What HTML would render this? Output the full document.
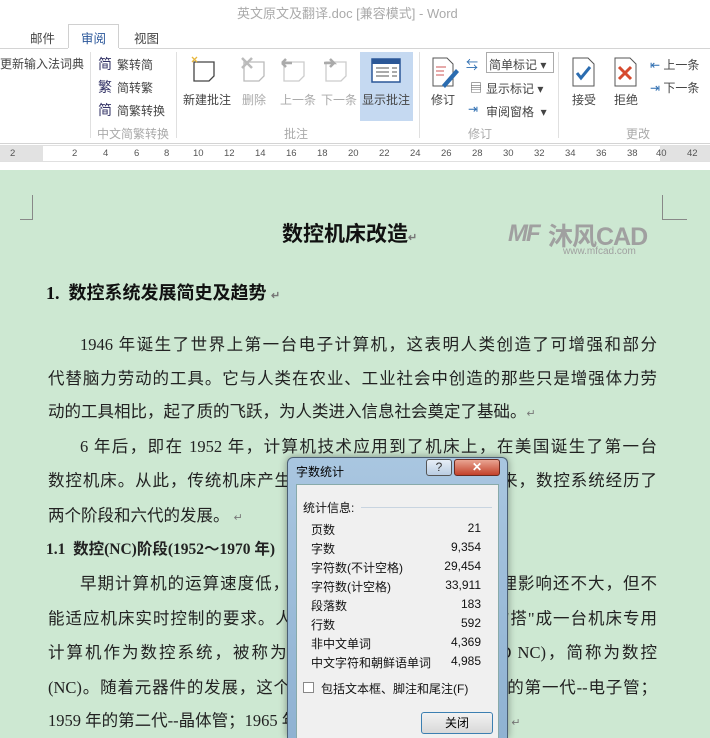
<!DOCTYPE html>
<html><head><meta charset="utf-8"><style>
*{margin:0;padding:0;box-sizing:border-box}
html,body{width:710px;height:738px;overflow:hidden}
body{position:relative;background:#fff;font-family:"Liberation Sans","Noto Sans CJK SC",sans-serif;color:#444}
.a{position:absolute;white-space:nowrap}
.t{font-size:12px}
.g{color:#aaa}
#doc{position:absolute;left:0;top:170px;width:710px;height:568px;background:#cde8d2}
.ln{position:absolute;font-size:16.5px;color:#222;text-align:justify;text-align-last:justify;white-space:nowrap;height:22px;line-height:22px;font-family:"Liberation Serif","Noto Sans CJK SC",sans-serif}
.ret{font-size:11px;color:#777}
#dlg{position:absolute;left:287px;top:457px;width:221px;height:281px;background:linear-gradient(#a9c6e0,#8fb2d2);border:1px solid #4b5f74;border-bottom:none;border-radius:6px 6px 0 0;box-shadow:0 0 8px rgba(0,0,0,.4);overflow:hidden}
#inner{position:absolute;left:8px;top:26px;width:203px;height:270px;background:#f0f0f0;border:1px solid #8aa;}
.r{position:absolute;left:14px;width:170px;font-size:12px;color:#111;display:flex;justify-content:space-between}
</style></head><body>
<div class="a t g" style="left:237px;top:3px;font-size:13px">英文原文及翻译.doc [兼容模式] - Word</div>
<div class="a t" style="left:30px;top:28px;font-size:12.5px">邮件</div>
<div style="position:absolute;left:68px;top:24px;width:51px;height:25px;border:1px solid #d0d0d0;border-bottom:none;background:#fff"></div>
<div class="a t" style="left:81px;top:28px;color:#2b579a;font-size:12.5px">审阅</div>
<div class="a t" style="left:134px;top:28px;font-size:12.5px">视图</div>
<div style="position:absolute;left:0;top:48px;width:710px;height:1px;background:#d4d4d4"></div>
<div style="position:absolute;left:68px;top:48px;width:51px;height:1px;background:#fff"></div>
<div style="position:absolute;left:0;top:143px;width:710px;height:1px;background:#d4d4d4"></div>
<div class="a t" style="left:0;top:55px">更新输入法词典</div>
<div style="position:absolute;left:90px;top:52px;width:1px;height:86px;background:#e0e0e0"></div>
<div class="a t" style="left:98px;top:54px;color:#336;font-size:14px">简</div><div class="a t" style="left:117px;top:56px">繁转简</div>
<div class="a t" style="left:98px;top:77px;color:#336;font-size:14px">繁</div><div class="a t" style="left:117px;top:79px">简转繁</div>
<div class="a t" style="left:98px;top:100px;color:#336;font-size:14px">简</div><div class="a t" style="left:117px;top:102px">简繁转换</div>
<div class="a t g" style="left:97px;top:125px">中文简繁转换</div>
<div style="position:absolute;left:176px;top:52px;width:1px;height:86px;background:#e0e0e0"></div>
<svg class="a" style="left:190px;top:56px" width="160" height="30"><g fill="none" stroke-width="1.3"><path d="M4 6h20v14l-5 5H4z" stroke="#444"/><path d="M2 1l5 5M7 1L2 6" stroke="#e8b840"/><path d="M54 6h20v14l-5 5H54z" stroke="#bbb"/><path d="M52 2l10 10M62 2L52 12" stroke="#bbb" stroke-width="2.5"/><path d="M94 6h20v14l-5 5H94z" stroke="#ccc"/><path d="M92 7h10M92 7l4-4M92 7l4 4" stroke="#aaa" stroke-width="2.5"/><path d="M136 6h20v14l-5 5h-15z" stroke="#ccc"/><path d="M134 7h10l-4-4M144 7l-4 4" stroke="#aaa" stroke-width="2.5"/></g></svg>
<div class="a t" style="left:183px;top:91px">新建批注</div>
<div class="a t g" style="left:242px;top:91px">删除</div>
<div class="a t g" style="left:280px;top:91px">上一条</div>
<div class="a t g" style="left:321px;top:91px">下一条</div>
<div style="position:absolute;left:360px;top:52px;width:53px;height:69px;background:#c5d9f1"></div>
<svg class="a" style="left:371px;top:58px" width="30" height="26"><rect x="1" y="1" width="28" height="23" fill="#fff" stroke="#2b5797" stroke-width="1.5"/><rect x="1" y="1" width="28" height="5" fill="#2b5797"/><path d="M5 10h13M5 14h13M5 18h13M21 10h5M21 14h5M21 18h5" stroke="#555"/></svg>
<div class="a t" style="left:362px;top:91px">显示批注</div>
<div class="a t g" style="left:284px;top:125px">批注</div>
<div style="position:absolute;left:419px;top:52px;width:1px;height:86px;background:#e0e0e0"></div>
<svg class="a" style="left:432px;top:57px" width="30" height="32"><path d="M1 1h14l6 6v22H1z" fill="#fff" stroke="#555"/><path d="M4 10h10M4 14h8M4 18h8" stroke="#c55"/><path d="M10 28l14-16 3 3-14 16z" fill="#2b6cb0"/></svg>
<div class="a t" style="left:431px;top:91px">修订</div>
<div style="position:absolute;left:486px;top:52px;width:68px;height:21px;border:1px solid #ababab"></div>
<div class="a t" style="left:489px;top:56px">简单标记 ▾</div>
<div class="a t" style="left:466px;top:56px;color:#2b6cb0">⇆</div>
<div class="a t" style="left:470px;top:79px">▤</div><div class="a t" style="left:486px;top:80px">显示标记 ▾</div>
<div class="a t" style="left:468px;top:102px;color:#2b6cb0">⇥</div><div class="a t" style="left:486px;top:103px">审阅窗格 &nbsp;▾</div>
<div class="a t g" style="left:468px;top:125px">修订</div>
<div style="position:absolute;left:558px;top:52px;width:1px;height:86px;background:#e0e0e0"></div>
<svg class="a" style="left:572px;top:57px" width="80" height="30"><path d="M1 1h15l6 6v22H1z" fill="#fff" stroke="#555"/><path d="M5 16l4 5 9-11" fill="none" stroke="#2b6cb0" stroke-width="3"/><path d="M43 1h15l6 6v22H43z" fill="#fff" stroke="#555"/><path d="M47 10l12 12M59 10L47 22" stroke="#d64a2e" stroke-width="3"/></svg>
<div class="a t" style="left:572px;top:91px">接受</div>
<div class="a t" style="left:614px;top:91px">拒绝</div>
<div class="a t" style="left:650px;top:56px"><span style="color:#2b6cb0">⇤</span> 上一条</div>
<div class="a t" style="left:650px;top:79px"><span style="color:#2b6cb0">⇥</span> 下一条</div>
<div class="a t g" style="left:626px;top:125px">更改</div>
<div style="position:absolute;left:0;top:145px;width:710px;height:17px;background:#fff;border-top:1px solid #e0e0e0;border-bottom:1px solid #e0e0e0"></div>
<div style="position:absolute;left:0;top:146px;width:43px;height:15px;background:#e2e2e2"></div>
<div style="position:absolute;left:660px;top:146px;width:50px;height:15px;background:#e2e2e2"></div>
<div class="a" style="left:0;top:148px;font-size:9.5px;color:#555;width:710px">
<span class="a" style="left:10px">2</span><span class="a" style="left:72px">2</span><span class="a" style="left:103px">4</span><span class="a" style="left:134px">6</span><span class="a" style="left:164px">8</span><span class="a" style="left:193px">10</span><span class="a" style="left:224px">12</span><span class="a" style="left:255px">14</span><span class="a" style="left:286px">16</span><span class="a" style="left:317px">18</span><span class="a" style="left:348px">20</span><span class="a" style="left:379px">22</span><span class="a" style="left:410px">24</span><span class="a" style="left:441px">26</span><span class="a" style="left:472px">28</span><span class="a" style="left:503px">30</span><span class="a" style="left:534px">32</span><span class="a" style="left:565px">34</span><span class="a" style="left:596px">36</span><span class="a" style="left:627px">38</span><span class="a" style="left:656px">40</span><span class="a" style="left:687px">42</span></div>
<div id="doc">
<div style="position:absolute;left:20px;top:25px;width:13px;height:25px;border-right:1px solid #888;border-bottom:1px solid #888"></div>
<div style="position:absolute;left:662px;top:25px;width:25px;height:25px;border-left:1px solid #888;border-bottom:1px solid #888"></div>
</div>
<div class="a" style="left:508px;top:220px;font-size:24px;font-weight:bold;color:#a0a0a0;font-style:italic;letter-spacing:-2px">MF</div>
<div class="a" style="left:548px;top:217px;font-size:25px;font-weight:bold;color:#a0a0a0;letter-spacing:-1px">沐风CAD</div>
<div class="a" style="left:563px;top:246px;font-size:10px;color:#a0a0a0">www.mfcad.com</div>
<div class="a" style="left:282px;top:218px;font-size:21px;font-weight:bold;color:#111">数控机床改造<span class="ret">↵</span></div>
<div class="a" style="left:46px;top:279px;font-size:18px;font-weight:bold;color:#111;font-family:'Liberation Serif','Noto Sans CJK SC',sans-serif">1.&nbsp; 数控系统发展简史及趋势 <span class="ret">↵</span></div>
<div class="ln" style="left:80px;top:334px;width:577px">1946 年诞生了世界上第一台电子计算机，这表明人类创造了可增强和部分</div>
<div class="ln" style="left:48px;top:368px;width:609px">代替脑力劳动的工具。它与人类在农业、工业社会中创造的那些只是增强体力劳</div>
<div class="ln" style="left:48px;top:401px;text-align-last:auto">动的工具相比，起了质的飞跃，为人类进入信息社会奠定了基础。<span class="ret">↵</span></div>
<div class="ln" style="left:80px;top:436px;width:577px">6 年后，即在 1952 年，计算机技术应用到了机床上，在美国诞生了第一台</div>
<div class="ln" style="left:48px;top:470px;width:609px">数控机床。从此，传统机床产生了质的变化。近半个世纪以来，数控系统经历了</div>
<div class="ln" style="left:48px;top:505px;text-align-last:auto">两个阶段和六代的发展。 <span class="ret">↵</span></div>
<div class="ln" style="left:46px;top:539px;font-weight:bold;font-size:15.5px;text-align-last:auto">1.1&nbsp; 数控(NC)阶段(1952～1970 年)</div>
<div class="ln" style="left:80px;top:573px;width:577px">早期计算机的运算速度低，对当时的科学计算和数据处理影响还不大，但不</div>
<div class="ln" style="left:48px;top:608px;width:609px">能适应机床实时控制的要求。人们不得不采用数字逻辑电路"搭"成一台机床专用</div>
<div class="ln" style="left:48px;top:642px;width:609px">计算机作为数控系统，被称为硬件连接数控(HARD-WIRED NC)，简称为数控</div>
<div class="ln" style="left:48px;top:677px;width:609px">(NC)。随着元器件的发展，这个阶段历经了三代，即 1952 年的第一代--电子管；</div>
<div class="ln" style="left:48px;top:710px;text-align-last:auto">1959 年的第二代--晶体管；1965 年的第三代--小规模集成电路。 <span class="ret">↵</span></div>
<div id="dlg">
<div class="a" style="left:8px;top:5px;font-size:12px;color:#000">字数统计</div>
<div style="position:absolute;left:138px;top:1px;width:26px;height:17px;border:1px solid #555;border-radius:3px;background:linear-gradient(#e6eef7,#b9cde2);font-size:12px;text-align:center;line-height:15px;color:#333">?</div>
<div style="position:absolute;left:166px;top:1px;width:46px;height:17px;border:1px solid #6a2a20;border-radius:3px;background:linear-gradient(#e9a592,#c3412a);font-size:12px;font-weight:bold;text-align:center;line-height:15px;color:#fff">✕</div>
<div id="inner">
<div class="a" style="left:6px;top:14px;font-size:12px;color:#111">统计信息:</div>
<div style="position:absolute;left:64px;top:22px;width:131px;height:1px;background:#c8d4e0"></div>
<div class="r" style="top:36px"><span>页数</span><span>21</span></div>
<div class="r" style="top:55px"><span>字数</span><span>9,354</span></div>
<div class="r" style="top:74px"><span>字符数(不计空格)</span><span>29,454</span></div>
<div class="r" style="top:93px"><span>字符数(计空格)</span><span>33,911</span></div>
<div class="r" style="top:112px"><span>段落数</span><span>183</span></div>
<div class="r" style="top:131px"><span>行数</span><span>592</span></div>
<div class="r" style="top:150px"><span>非中文单词</span><span>4,369</span></div>
<div class="r" style="top:169px"><span>中文字符和朝鲜语单词</span><span>4,985</span></div>
<div style="position:absolute;left:6px;top:197px;width:11px;height:11px;border:1px solid #888;background:#fff"></div>
<div class="a" style="left:24px;top:195px;font-size:12px;color:#111">包括文本框、脚注和尾注(F)</div>
<div style="position:absolute;left:124px;top:227px;width:72px;height:22px;border:1px solid #3c7fb1;border-radius:3px;background:linear-gradient(#f2f2f2,#d8d8d8);font-size:12px;text-align:center;line-height:20px;color:#000">关闭</div>
</div></div>
</body></html>
